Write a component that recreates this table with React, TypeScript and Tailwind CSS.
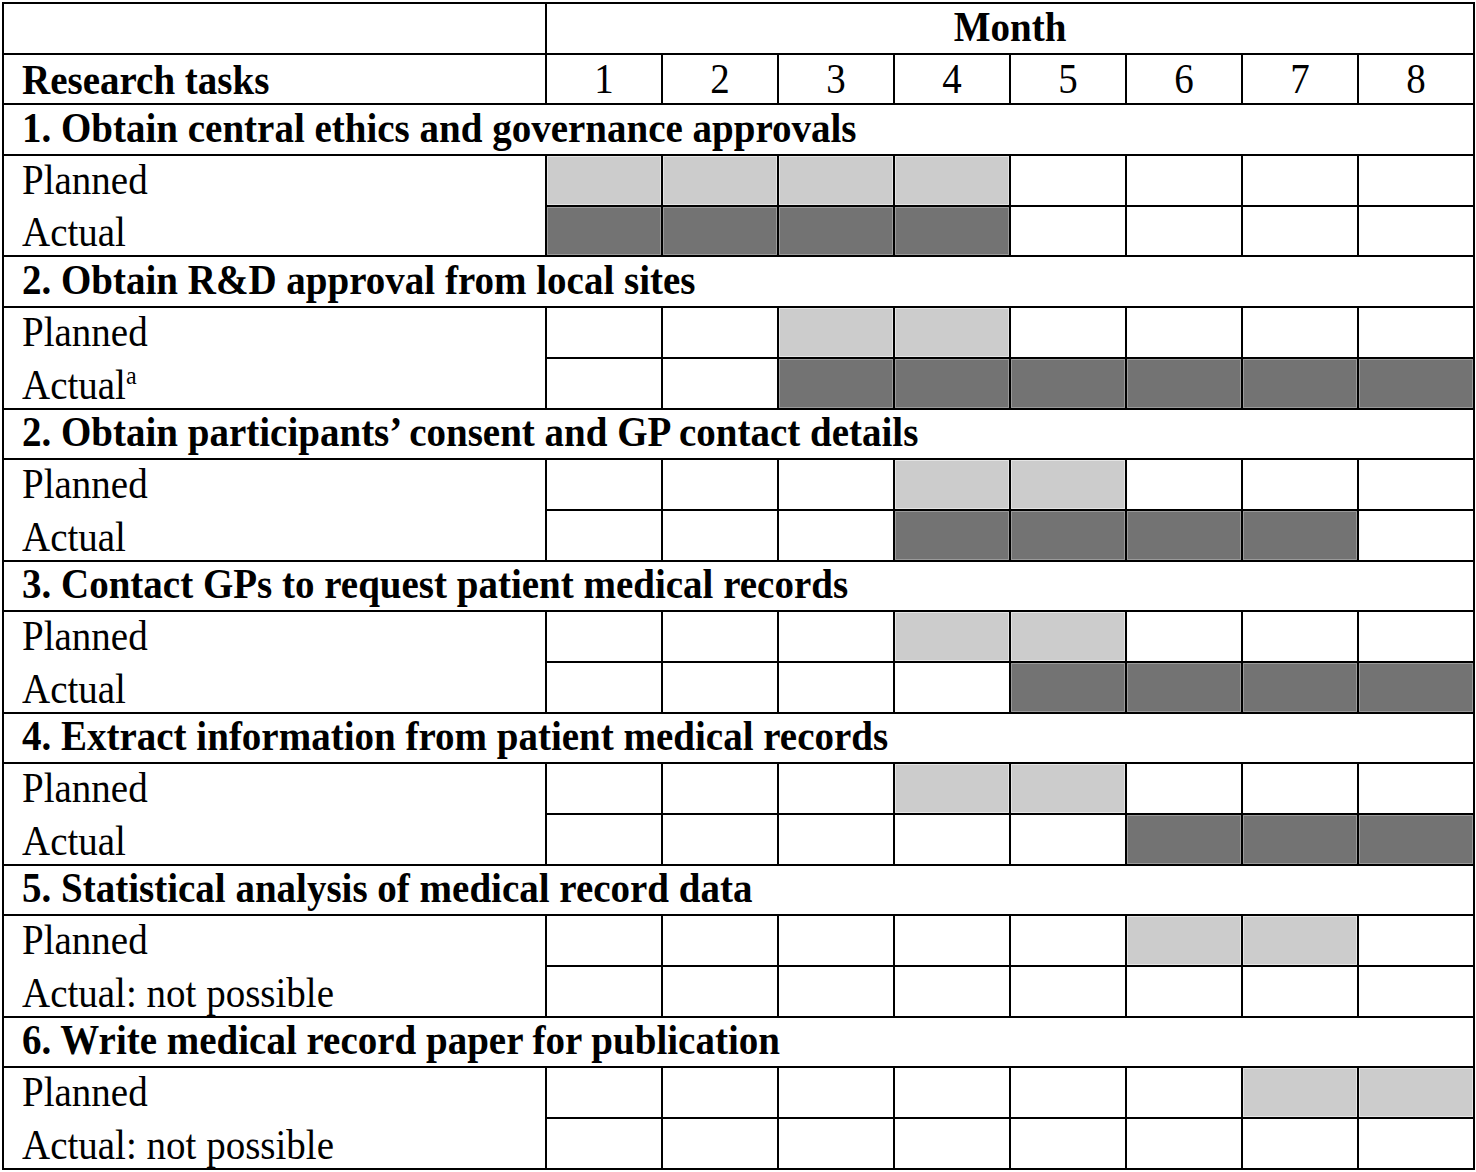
import React from "react";

type Task = {
  title: string;
  planned: number[];
  actual: number[];
  actualLabel: React.ReactNode;
};

const tasks: Task[] = [
  {
    title: "1. Obtain central ethics and governance approvals",
    planned: [1, 2, 3, 4],
    actual: [1, 2, 3, 4],
    actualLabel: "Actual",
  },
  {
    title: "2. Obtain R&D approval from local sites",
    planned: [3, 4],
    actual: [3, 4, 5, 6, 7, 8],
    actualLabel: (
      <>
        Actual<span className="relative -top-[14px] text-[24px]">a</span>
      </>
    ),
  },
  {
    title: "2. Obtain participants\u2019 consent and GP contact details",
    planned: [4, 5],
    actual: [4, 5, 6, 7],
    actualLabel: "Actual",
  },
  {
    title: "3. Contact GPs to request patient medical records",
    planned: [4, 5],
    actual: [5, 6, 7, 8],
    actualLabel: "Actual",
  },
  {
    title: "4. Extract information from patient medical records",
    planned: [4, 5],
    actual: [6, 7, 8],
    actualLabel: "Actual",
  },
  {
    title: "5. Statistical analysis of medical record data",
    planned: [6, 7],
    actual: [],
    actualLabel: "Actual: not possible",
  },
  {
    title: "6. Write medical record paper for publication",
    planned: [7, 8],
    actual: [],
    actualLabel: "Actual: not possible",
  },
];

const months = [1, 2, 3, 4, 5, 6, 7, 8];

const cell = "border-r-2 border-b-2 border-black";

// the scan is a touch taller than the font, so stretch glyphs upward a bit
function T({ children }: { children: React.ReactNode }) {
  return <span className="inline-block origin-bottom scale-y-[1.07] whitespace-nowrap">{children}</span>;
}

function MonthCells({ filled, shade }: { filled: number[]; shade: "light" | "dark" }) {
  return (
    <>
      {months.map((m) => {
        const on = filled.includes(m);
        return (
          <div
            key={m}
            className={
              cell +
              " " +
              (on
                ? shade === "light"
                  ? "bg-[#cccccc] shadow-[inset_0_0_0_1px_#e4e4e4]"
                  : "bg-[#737373] shadow-[inset_0_0_0_1px_#9a9a9a]"
                : "bg-white")
            }
          />
        );
      })}
    </>
  );
}

export default function App() {
  return (
    <div className="bg-white w-[1476px] h-[1172px] pt-[2px] pl-[2px]">
      <div
        className="grid grid-cols-[543px_repeat(8,116px)] auto-rows-[50.7px] border-l-2 border-t-2 border-black w-[1473px] text-black text-[39px] leading-none"
        style={{ fontFamily: '"Liberation Serif", "Times New Roman", serif' }}
      >
        {/* header */}
        <div className={cell} />
        <div className={cell + " col-span-8 flex items-end justify-center pb-[6px] font-bold"}>
          <T>Month</T>
        </div>
        <div className={cell + " flex items-end pl-[18px] pb-[3px] font-bold"}>
          <T>Research tasks</T>
        </div>
        {months.map((m) => (
          <div key={m} className={cell + " flex items-end justify-center pb-[4px]"}>
            <T>{m}</T>
          </div>
        ))}

        {tasks.map((t) => (
          <React.Fragment key={t.title}>
            <div className={cell + " col-span-9 flex items-end pl-[18px] pb-[6px] font-bold"}>
              <T>{t.title}</T>
            </div>
            <div className="border-r-2 border-black flex items-end pl-[18px] pb-[7px]">
              <T>Planned</T>
            </div>
            <MonthCells filled={t.planned} shade="light" />
            <div className={cell + " flex items-end pl-[18px] pb-[3px]"}>
              <T>{t.actualLabel}</T>
            </div>
            <MonthCells filled={t.actual} shade="dark" />
          </React.Fragment>
        ))}
      </div>
    </div>
  );
}
